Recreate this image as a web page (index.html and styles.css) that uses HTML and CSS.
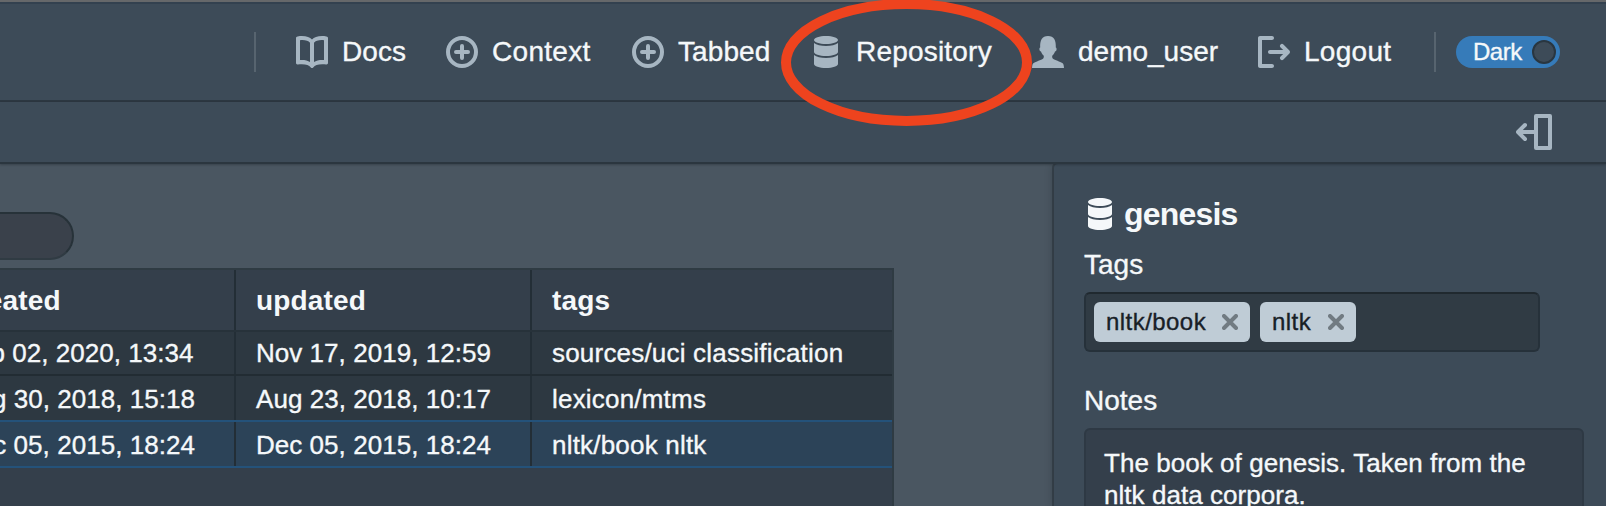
FILE: index.html
```html
<!DOCTYPE html>
<html lang="en">
<head>
<meta charset="utf-8">
<title>Repository</title>
<link rel="stylesheet" href="styles.css">
</head>
<body>
<svg class="sprite" aria-hidden="true">
  <symbol id="database" viewBox="0 0 16 16"><path d="M8 4c3.31 0 6-.9 6-2s-2.69-2-6-2C4.68 0 2 .9 2 2s2.68 2 6 2zm-6-.48V8c0 1.1 2.69 2 6 2s6-.9 6-2V3.52C12.78 4.4 10.56 5 8 5s-4.78-.6-6-1.48zm0 6V14c0 1.1 2.69 2 6 2s6-.9 6-2V9.52C12.78 10.4 10.56 11 8 11s-4.78-.6-6-1.48z"/></symbol>
  <symbol id="add" viewBox="0 0 16 16"><g fill="none" stroke="currentColor" stroke-width="2" stroke-linecap="round"><circle cx="8" cy="8" r="7"/><path d="M8 5v6M5 8h6"/></g></symbol>
  <symbol id="manual" viewBox="0 0 16 16"><path d="M15.2.2C11.500-.3 9.300.5 8 1.700 6.700.5 4.500-.3.8.2.3.3 0 .6 0 1v12.500c0 .5.400.8.900.7 3.600-.4 5.400.2 6.500 1.500.3.4.9.4 1.200 0 1.100-1.300 2.900-1.900 6.500-1.500.5.1.9-.2.9-.7V1c0-.4-.3-.7-.8-.8zM7 13c-1.200-.8-2.700-1.100-5-1V2.100c2.400-.2 4.200.2 5 1.300zm7-1c-2.300-.1-3.800.2-5 1V3.400c.8-1.100 2.600-1.500 5-1.300z"/></symbol>
  <symbol id="person" viewBox="0 0 16 16"><path d="M16 16c-.1-1.500-.3-2.200-.9-2.500-.9-.6-3.800-1.500-4.600-2.100-.5-.4-.5-1.200-.3-1.600.6-.5 1-1.100 1.300-2 .5-.1.8-.6.8-1.200 0-.5-.1-.8-.4-.9C12.100 2.200 11 0 8 0S3.900 2.200 4.100 5.700c-.3.1-.4.4-.4.900 0 .6.3 1.100.8 1.200.3.900.7 1.500 1.300 2 .2.400.2 1.200-.3 1.600-.8.600-3.700 1.500-4.600 2.100-.6.300-.8 1-.9 2.500z"/></symbol>
  <symbol id="logout" viewBox="0 0 16 16"><path d="M7 14H2V2h5c.55 0 1-.45 1-1s-.45-1-1-1H1C.45 0 0 .45 0 1v14c0 .55.45 1 1 1h6c.55 0 1-.45 1-1s-.45-1-1-1zm8.710-6.710l-3-3a1.003 1.003 0 00-1.420 1.420L12.590 7H6c-.55 0-1 .45-1 1s.45 1 1 1h6.590l-1.300 1.290a1.003 1.003 0 001.420 1.420l3-3c.18-.18.29-.43.29-.71s-.11-.53-.29-.71z"/></symbol>
  <symbol id="collapse" viewBox="0 0 36 36"><g fill="none" stroke="currentColor" stroke-width="4" stroke-linecap="round" stroke-linejoin="round"><path d="M20 2h14v32H20zM20 18H3M9 11l-7 7 7 7"/><path d="M4 16v4" stroke-width="3"/></g></symbol>
  <symbol id="cross" viewBox="0 0 16 16"><path d="M2 2l12 12M14 2L2 14" fill="none" stroke="currentColor" stroke-width="4" stroke-linecap="round"/></symbol>
</svg>
<nav class="navbar">
  <span class="divider"></span>
  <a class="nav-item docs"><svg class="icon"><use href="#manual"/></svg>Docs</a>
  <a class="nav-item context"><svg class="icon"><use href="#add"/></svg>Context</a>
  <a class="nav-item tabbed"><svg class="icon"><use href="#add"/></svg>Tabbed</a>
  <a class="nav-item repository"><svg class="icon"><use href="#database"/></svg>Repository</a>
  <a class="nav-item user"><svg class="icon"><use href="#person"/></svg>demo_user</a>
  <a class="nav-item logout"><svg class="icon"><use href="#logout"/></svg>Logout</a>
  <span class="divider"></span>
  <div class="switch"><span class="switch-label">Dark</span><span class="knob"></span></div>
</nav>
<div class="toolbar"><svg class="collapse-icon"><use href="#collapse"/></svg></div>
<div class="content">
  <main class="main">
    <div class="search"></div>
    <div class="table-panel">
      <div class="row head"><div class="cell">created</div><div class="cell">updated</div><div class="cell">tags</div></div>
      <div class="row first"><div class="cell">Feb 02, 2020, 13:34</div><div class="cell">Nov 17, 2019, 12:59</div><div class="cell wide">sources/uci classification</div></div>
      <div class="row"><div class="cell">Aug 30, 2018, 15:18</div><div class="cell">Aug 23, 2018, 10:17</div><div class="cell wide">lexicon/mtms</div></div>
      <div class="row selected"><div class="cell">Dec 05, 2015, 18:24</div><div class="cell">Dec 05, 2015, 18:24</div><div class="cell wide">nltk/book nltk</div></div>
    </div>
  </main>
  <aside class="sidebar">
    <h2 class="title"><svg class="icon"><use href="#database"/></svg>genesis</h2>
    <div class="label">Tags</div>
    <div class="tag-input">
      <span class="tag tag-book">nltk/book<svg class="cross"><use href="#cross"/></svg></span>
      <span class="tag tag-nltk">nltk<svg class="cross"><use href="#cross"/></svg></span>
    </div>
    <div class="label notes-label">Notes</div>
    <div class="notes">The book of genesis. Taken from the<br>nltk data corpora.</div>
  </aside>
</div>
<svg class="highlight" viewBox="0 0 254 130"><ellipse cx="126.500" cy="62.500" rx="120.500" ry="58.500" fill="none" stroke="#ee431e" stroke-width="10"/></svg>
</body>
</html>
```
FILE: styles.css
```css
* { box-sizing: border-box; }
body {
  margin: 0;
  width: 1606px;
  height: 506px;
  overflow: hidden;
  position: relative;
  display: flex;
  flex-direction: column;
  background: #4a5661;
  color: #f5f8fa;
  font-family: "Liberation Sans", Arial, sans-serif;
  font-size: 28px;
  -webkit-text-stroke: .35px currentColor;
}
.sprite { position: absolute; width: 0; height: 0; }
.icon { width: 32px; height: 32px; fill: currentColor; flex: none; }

.navbar {
  height: 102px;
  flex: none;
  display: flex;
  align-items: center;
  padding: 2px 46px 0 254px;
  border-top: 2px solid #66686a;
  border-bottom: 2px solid #2c3741;
  background: #3d4b58;
  box-shadow: inset 0 2px #33414f;
}
.divider { width: 2px; height: 40px; margin-right: 20px; background: #57646f; flex: none; }
.nav-item { display: flex; align-items: center; gap: 14px; padding-left: 20px; height: 60px; white-space: nowrap; letter-spacing: .1px; }
.nav-item .icon { color: #a7b6c2; }
.docs { width: 150px; }
.context { width: 186px; letter-spacing: .3px; }
.tabbed { width: 178px; }
.repository { width: 222px; letter-spacing: .2px; }
.user { width: 226px; letter-spacing: 0; }
.logout { width: 196px; letter-spacing: .3px; }
.switch {
  width: 104px;
  height: 32px;
  border-radius: 16px;
  background: #367bb9;
  display: flex;
  align-items: center;
  justify-content: space-between;
  padding: 0 4px 0 17px;
  font-size: 24px;
  letter-spacing: -0.5px;
}
.knob { width: 24px; height: 24px; border-radius: 50%; border: 2px solid #293640; background: #3d4b58; }

.toolbar {
  height: 62px;
  flex: none;
  display: flex;
  align-items: center;
  justify-content: flex-end;
  padding: 0 54px 4px 0;
  border-bottom: 2px solid #2b363f;
  background: #3d4b58;
  position: relative;
  box-shadow: 0 1px 2px rgba(16, 22, 26, .3);
}
.collapse-icon { width: 36px; height: 36px; color: #a7b6c2; margin-top: 4px; }

.content { flex: 1; min-height: 0; display: flex; overflow: hidden; }
.main { width: 1054px; flex: none; padding-top: 48px; overflow: hidden; }
.search {
  width: 98px;
  height: 48px;
  margin-left: -24px;
  border: 2px solid #273239;
  border-bottom-color: #303b43;
  border-radius: 24px;
  background: #3a414b;
}
.table-panel {
  width: 956px;
  height: 250px;
  margin: 8px 0 0 -62px;
  border: 2px solid #2f3b43;
  background: #343f4b;
}
.row { display: grid; grid-template-columns: 296px 296px 360px; height: 46px; background: #2d3841; border-bottom: 2px solid #222c33; font-size: 26px; }
.cell { padding: 2px 0 0 20px; display: flex; align-items: center; white-space: nowrap; border-right: 2px solid #232e36; letter-spacing: .04px; }
.cell:last-child { border-right: 0; }
.wide { letter-spacing: .2px; }
.head { height: 62px; font-size: 28px; font-weight: bold; background: #343f4b; border-color: #27323a; -webkit-text-stroke: 0; }
.head .cell { letter-spacing: .15px; }
.first { height: 44px; }
.first .cell { padding-top: 0; }
.row:nth-child(3) { border-color: #24527a; }
.selected { background: #2c4358; border-color: #24527a; }

.sidebar {
  flex: 1;
  padding: 34px 22px 0 30px;
  background: #3d4b58;
  box-shadow: 0 0 0 2px rgba(35, 45, 54, .5), 0 0 8px rgba(16, 22, 26, .35);
  border-top-left-radius: 4px;
}
.title { display: flex; align-items: center; gap: 8px; height: 32px; margin: 0; font-size: 32px; line-height: 32px; letter-spacing: -0.8px; -webkit-text-stroke: 0; }
.label { height: 32px; line-height: 32px; margin-top: 19px; }
.tag-input {
  width: 456px;
  height: 60px;
  margin-top: 11px;
  padding: 8px;
  display: flex;
  gap: 10px;
  border: 2px solid #26313a;
  border-top-color: #20292f;
  border-radius: 6px;
  background: #303b44;
}
.tag {
  display: flex;
  align-items: center;
  justify-content: space-between;
  height: 40px;
  padding: 0 12px;
  border-radius: 6px;
  background: #bfccd6;
  color: #182026;
  font-size: 24px;
  letter-spacing: .45px;
}
.tag-book { width: 156px; }
.tag-nltk { width: 96px; }
.cross { width: 16px; height: 16px; color: #717b82; }
.notes-label { margin-top: 33px; }
.notes {
  height: 160px;
  margin-top: 11px;
  padding: 17px 18px;
  border: 2px solid #2e3944;
  border-radius: 6px;
  background: #343f4b;
  font-size: 26px;
  line-height: 32px;
  letter-spacing: .05px;
  white-space: nowrap;
}
.highlight { position: absolute; left: 780px; top: 0; width: 254px; height: 130px; }
```
